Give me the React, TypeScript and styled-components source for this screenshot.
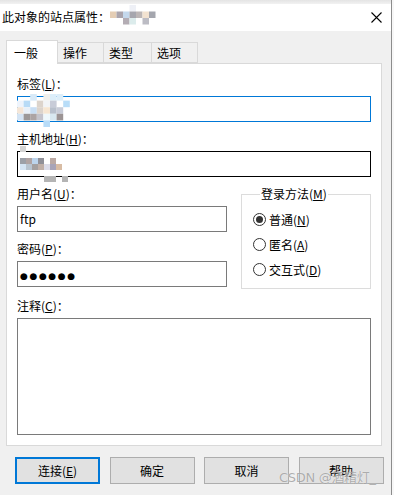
import React, { FC } from 'react';
import styled, { createGlobalStyle } from 'styled-components';

const GlobalStyle = createGlobalStyle`
  html, body {
    margin: 0;
    padding: 0;
    background: #f7f7f7;
  }
  body {
    font-family: 'Noto Sans CJK SC', 'Noto Sans', sans-serif;
    font-size: 12px;
    color: #000;
  }
`;

const Window = styled.div`
  position: relative;
  width: 391px;
  height: 495px;
  border-right: 1px solid #8c8c8c;
  background: #f0f0f0;
  overflow: hidden;
`;

const Shadow = styled.div`
  height: 4px;
  background: linear-gradient(#e4e4e4, #f2f2f2);
`;

const TitleBar = styled.div`
  height: 27px;
  display: flex;
  align-items: center;
  padding-left: 2px;
  background: #fff;
`;

const TitleText = styled.span`
  font-size: 12px;
  line-height: 16px;
  margin-top: -2px;
`;

const CloseButton = styled.div`
  margin-left: auto;
  width: 32px;
  height: 27px;
  display: flex;
  align-items: center;
  justify-content: center;
  margin-right: -1px;
`;

const Body = styled.div`
  padding: 9px 0 0 6px;
`;

const TabStrip = styled.div`
  display: flex;
  align-items: flex-end;
  height: 23px;
`;

const Tab = styled.div<{ $active?: boolean; $w: number }>`
  position: relative;
  box-sizing: border-box;
  width: ${(p) => p.$w}px;
  height: ${(p) => (p.$active ? 24 : 21)}px;
  margin-bottom: ${(p) => (p.$active ? -1 : 0)}px;
  margin-left: ${(p) => (p.$active ? 0 : -1)}px;
  border: 1px solid #d9d9d9;
  border-bottom: ${(p) => (p.$active ? 'none' : '1px solid #d9d9d9')};
  background: ${(p) => (p.$active ? '#fff' : '#f0f0f0')};
  z-index: ${(p) => (p.$active ? 2 : 1)};
  font-size: 12px;
  line-height: 16px;
  padding: ${(p) => (p.$active ? '4px 0 0 7px' : '2px 0 0 5px')};
`;

const Panel = styled.div`
  position: relative;
  z-index: 1;
  box-sizing: border-box;
  width: 376px;
  height: 383px;
  background: #fff;
  border: 1px solid #d9d9d9;
  padding: 12px 10px 0 10px;
  display: flex;
  flex-direction: column;
  gap: 9px;
`;

const Field = styled.div`
  display: flex;
  flex-direction: column;
  gap: 4px;
`;

const Label = styled.div`
  font-size: 12px;
  line-height: 16px;
  height: 16px;
  u {
    text-decoration: underline;
    text-underline-offset: 1px;
  }
`;

const InputBox = styled.div<{ $border: string; $height?: number }>`
  position: relative;
  box-sizing: border-box;
  height: ${(p) => p.$height ?? 26}px;
  border: 1px solid ${(p) => p.$border};
  background: #fff;
  padding: 0 2px;
  font-size: 12px;
  line-height: 24px;
`;

const Dots = styled.span`
  font-family: 'DejaVu Sans', sans-serif;
  font-size: 9px;
  letter-spacing: 1.6px;
  line-height: 24px;
`;

const Row = styled.div`
  display: flex;
  gap: 14px;
`;

const Column = styled.div`
  width: 210px;
  display: flex;
  flex-direction: column;
  gap: 9px;
`;

const GroupBox = styled.fieldset`
  box-sizing: border-box;
  width: 130px;
  height: 103px;
  margin: 0;
  padding: 5px 0 0 11px;
  border: 1px solid #dcdcdc;
  min-width: 0;
`;

const Legend = styled.legend`
  padding: 0 1px;
  margin-left: 7px;
  font-size: 12px;
  line-height: 16px;
  u {
    text-decoration: underline;
    text-underline-offset: 1px;
  }
`;

const RadioRow = styled.div`
  height: 25px;
  display: flex;
  align-items: center;
  gap: 3px;
  font-size: 12px;
  u {
    text-decoration: underline;
    text-underline-offset: 1px;
  }
`;

const RadioCircle = styled.span<{ $checked?: boolean }>`
  box-sizing: border-box;
  width: 13px;
  height: 13px;
  border-radius: 50%;
  border: 1px solid #333;
  background: #fff;
  display: flex;
  align-items: center;
  justify-content: center;
  &::after {
    content: '';
    display: ${(p) => (p.$checked ? 'block' : 'none')};
    width: 7px;
    height: 7px;
    border-radius: 50%;
    background: #333;
  }
`;

const ButtonRow = styled.div`
  display: flex;
  padding: 11px 0 0 9px;
  gap: 9.5px;
`;

const Button = styled.div<{ $default?: boolean }>`
  box-sizing: border-box;
  width: 85px;
  height: 27px;
  background: #e1e1e1;
  border: ${(p) => (p.$default ? '2px solid #0078d7' : '1px solid #adadad')};
  display: flex;
  align-items: center;
  justify-content: center;
  font-size: 12px;
  u {
    text-decoration: underline;
    text-underline-offset: 1px;
  }
`;

const MosaicWrap = styled.svg<{ $left: number; $top: number }>`
  position: absolute;
  left: ${(p) => p.$left}px;
  top: ${(p) => p.$top}px;
`;

const Watermark = styled.div`
  position: absolute;
  left: 279px;
  top: 469px;
  font-family: 'DejaVu Sans', 'Noto Sans CJK SC', sans-serif;
  font-size: 13px;
  line-height: 18px;
  color: rgba(140, 140, 140, 0.7);
  text-shadow: 0 0 1px rgba(255, 255, 255, 0.8);
  letter-spacing: -0.3px;
  z-index: 5;
`;

type Cell = [number, number, string];

// pixelated mosaic that hides text in the screenshot
const Mosaic: FC<{ left: number; top: number; size: number; cells: Cell[] }> = ({
  left,
  top,
  size,
  cells,
}) => {
  const w = Math.max(...cells.map((c) => c[0])) + 1;
  const h = Math.max(...cells.map((c) => c[1])) + 1;
  return (
    <MosaicWrap $left={left} $top={top} width={w * size} height={h * size}>
      {cells.map(([x, y, c], i) => (
        <rect key={i} x={x * size} y={y * size} width={size} height={size} fill={c} />
      ))}
    </MosaicWrap>
  );
};

const titleCells: Cell[] = [
  [3, 0, '#eef0f6'],
  [0, 1, '#e4cdb4'],
  [1, 1, '#aaa4ac'],
  [2, 1, '#c4d8ec'],
  [3, 1, '#a6a6ae'],
  [4, 1, '#bcb6b6'],
  [5, 1, '#f2e2d0'],
  [6, 1, '#a4a6ae'],
  [2, 2, '#b4adb4'],
  [3, 2, '#dcecec'],
  [5, 2, '#bcbcc4'],
];

const labelCells: Cell[] = [
  [2, 0, '#d8eaf8'],
  [4, 0, '#f0f0ec'],
  [5, 0, '#dceefa'],
  [6, 0, '#dceefa'],
  [0, 1, '#eef4fc'],
  [1, 1, '#b8dbf6'],
  [3, 1, '#dcd4cc'],
  [4, 1, '#f2f4f6'],
  [5, 1, '#c8ccd8'],
  [7, 1, '#b8ddf8'],
  [0, 2, '#f4e6d8'],
  [1, 2, '#e8f0f8'],
  [2, 2, '#c8def4'],
  [3, 2, '#dcd4cc'],
  [4, 2, '#f6e6d2'],
  [5, 2, '#b8c0cc'],
  [6, 2, '#c8ccd8'],
  [0, 3, '#d4e4f4'],
  [1, 3, '#9c9898'],
  [2, 3, '#aca4a4'],
  [3, 3, '#c4c4cc'],
  [4, 3, '#eef8fc'],
  [5, 3, '#d8e8f0'],
  [6, 3, '#9c9494'],
  [4, 4, '#b8dcf8'],
];

const hostCells: Cell[] = [
  [0, 0, '#d4d4d4'],
  [0, 2, '#9ca0a8'],
  [1, 2, '#b0a4a4'],
  [2, 2, '#bcd4ec'],
  [3, 2, '#909098'],
  [5, 2, '#bcaaa4'],
  [0, 3, '#d4e4f4'],
  [1, 3, '#b8c4d0'],
  [2, 3, '#a4a0a0'],
  [3, 3, '#c0b0a8'],
  [4, 3, '#dcdce8'],
  [5, 3, '#a8a4b8'],
  [6, 3, '#d8bca4'],
  [4, 5, '#b4b4b4'],
  [5, 5, '#b4b4b4'],
  [7, 5, '#b4b4b4'],
];

const CloseIcon: FC = () => (
  <svg width="11" height="11" viewBox="0 0 11 11">
    <path d="M0.5 0.5 L10.5 10.5 M10.5 0.5 L0.5 10.5" stroke="#000" strokeWidth="1.1" />
  </svg>
);

const App: FC = () => (
  <>
    <GlobalStyle />
    <Window>
      <Shadow />
      <TitleBar>
        <TitleText>此对象的站点属性：</TitleText>
        <Mosaic left={110} top={5} size={6.5} cells={titleCells} />
        <CloseButton>
          <CloseIcon />
        </CloseButton>
      </TitleBar>
      <Body>
        <TabStrip>
          <Tab $active $w={52}>一般</Tab>
          <Tab $w={47}>操作</Tab>
          <Tab $w={49}>类型</Tab>
          <Tab $w={47}>选项</Tab>
        </TabStrip>
        <Panel>
          <Field>
            <Label>
              标签(<u>L</u>)：
            </Label>
            <InputBox $border="#0078d7">
              <Mosaic left={-1} top={-3} size={6.6} cells={labelCells} />
            </InputBox>
          </Field>
          <Field>
            <Label>
              主机地址(<u>H</u>)：
            </Label>
            <InputBox $border="#000">
              <Mosaic left={2} top={-6} size={6} cells={hostCells} />
            </InputBox>
          </Field>
          <Row>
            <Column>
              <Field>
                <Label>
                  用户名(<u>U</u>)：
                </Label>
                <InputBox $border="#7a7a7a">ftp</InputBox>
              </Field>
              <Field>
                <Label>
                  密码(<u>P</u>)：
                </Label>
                <InputBox $border="#7a7a7a">
                  <Dots>●●●●●●</Dots>
                </InputBox>
              </Field>
            </Column>
            <GroupBox>
              <Legend>
                登录方法(<u>M</u>)
              </Legend>
              <RadioRow>
                <RadioCircle $checked />
                <span>
                  普通(<u>N</u>)
                </span>
              </RadioRow>
              <RadioRow>
                <RadioCircle />
                <span>
                  匿名(<u>A</u>)
                </span>
              </RadioRow>
              <RadioRow>
                <RadioCircle />
                <span>
                  交互式(<u>D</u>)
                </span>
              </RadioRow>
            </GroupBox>
          </Row>
          <Field>
            <Label>
              注释(<u>C</u>)：
            </Label>
            <InputBox $border="#7a7a7a" $height={117} />
          </Field>
        </Panel>
        <ButtonRow>
          <Button $default>
            连接(<u>E</u>)
          </Button>
          <Button>确定</Button>
          <Button>取消</Button>
          <Button>帮助</Button>
        </ButtonRow>
      </Body>
      <Watermark>CSDN @酒精灯_</Watermark>
    </Window>
  </>
);

export default App;
